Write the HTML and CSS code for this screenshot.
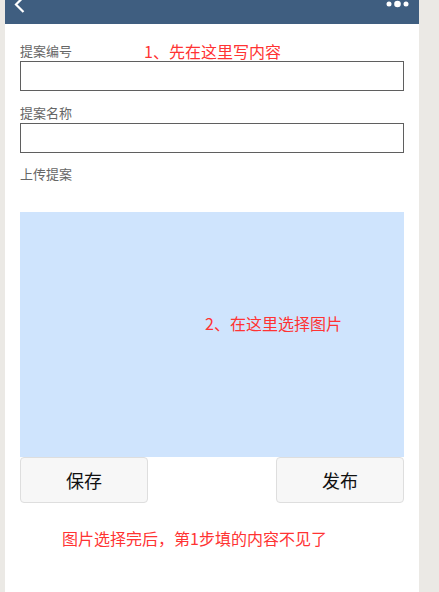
FILE: index.html
```html
<!DOCTYPE html>
<html lang="zh-CN">
<head>
<meta charset="utf-8">
<title>提案</title>
<link rel="stylesheet" href="styles.css">
</head>
<body>
<div class="page">
  <div class="header">
    <svg class="back" width="24" height="24" viewBox="0 0 24 24"><path d="M18.5 -3 L11 4.5 L18.5 12" fill="none" stroke="#fff" stroke-width="2.2"/></svg>
    <svg class="more" width="30" height="24" viewBox="0 0 30 24"><circle cx="5" cy="4" r="2.5" fill="#fff"/><circle cx="13.5" cy="4" r="3.3" fill="#fff"/><circle cx="22" cy="4" r="2.5" fill="#fff"/></svg>
  </div>
  <div class="content">
    <div class="label first"><span>提案编号</span><span class="hint hint1">1、先在这里写内容</span></div>
    <div class="input"></div>
    <div class="label">提案名称</div>
    <div class="input"></div>
    <div class="label third">上传提案</div>
    <div class="upload"><span class="hint hint2">2、在这里选择图片</span></div>
    <div class="buttons">
      <div class="btn">保存</div>
      <div class="btn">发布</div>
    </div>
    <div class="hint note">图片选择完后，第1步填的内容不见了</div>
  </div>
</div>
</body>
</html>
```
FILE: styles.css
```css
html, body {
  margin: 0;
  padding: 0;
}
body {
  background: #ebe9e5;
  font-family: "Noto Sans CJK SC", "Noto Sans", sans-serif;
  width: 439px;
  height: 592px;
  overflow: hidden;
}
.page {
  margin-left: 5px;
  width: 414px;
  height: 592px;
  background: #fff;
}
.header {
  height: 24px;
  background: #3f5e80;
  display: flex;
  justify-content: space-between;
  align-items: flex-start;
  overflow: hidden;
}
.back {
  margin-left: 0;
  overflow: visible;
}
.more {
  margin-right: 5px;
}
.content {
  padding: 0 15px;
}
.label {
  font-size: 13px;
  line-height: 20px;
  color: #666;
  margin-top: 12px;
  display: flex;
  align-items: center;
}
.label.first {
  margin-top: 16px;
  height: 21px;
}
.label.third {
  margin-top: 11px;
}
.hint {
  color: #ff3333;
  font-size: 16px;
  line-height: 20px;
}
.hint1 {
  margin-left: 72px;
}
.input {
  height: 28px;
  border: 1px solid #5f5f5f;
  background: #fff;
}
.upload {
  margin-top: 28px;
  height: 245px;
  background: #cfe4fd;
  padding: 101px 0 0 185px;
  box-sizing: border-box;
}
.upload .hint {
  display: block;
}
.buttons {
  display: flex;
  justify-content: space-between;
}
.btn {
  width: 126px;
  height: 44px;
  border: 1px solid #dedede;
  border-radius: 4px;
  background: #f7f7f7;
  font-size: 18px;
  color: #111;
  display: flex;
  align-items: center;
  justify-content: center;
}
.note {
  margin-top: 25px;
  margin-left: 42px;
}
```
